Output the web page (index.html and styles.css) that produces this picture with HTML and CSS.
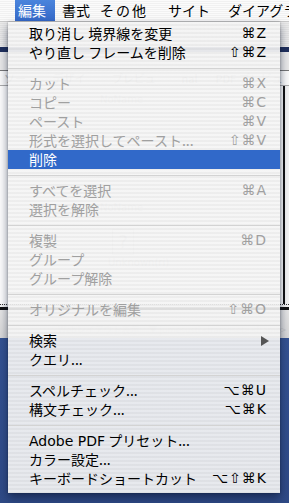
FILE: index.html
```html
<html>
  <head>
    <link rel="stylesheet" href="styles.css">
  </head>
  <body>
    <div class="screen">
      <div class="menubar">
        <span class="title on">編集</span>
        <span class="title t-fmt">書式</span>
        <span class="title t-etc">その他</span>
        <span class="title t-site">サイト</span>
        <span class="title t-diag">ダイアグラム</span>
      </div>

      <div class="window">
        <div class="win-top"><span class="file">Sample.shtml</span></div>
        <div class="win-band"></div>
        <div class="win-bar"></div>
        <div class="win-tools">
          <span>ソース</span><span>デザイン</span><span>プレビュー</span><span>nal</span><span>PDF プレビュー</span>
        </div>
        <div class="win-doc">
          <div class="frame">NoName</div>
          <div class="frame low">
            NoName
            <div class="unknown">?</div>
            <div class="cap">Unknown(ri)</div>
          </div>
        </div>
        <div class="win-dots"></div>
        <div class="win-line"></div>
        <div class="win-status">Webレイアウト表示　▼ jumesusti &lt;frameset&gt; &lt;frame&gt;</div>
      </div>

      <div class="menu">
        <div class="item"><span>取り消し 境界線を変更</span><span class="key">⌘Z</span></div>
        <div class="item"><span>やり直し フレームを削除</span><span class="key">⇧⌘Z</span></div>
        <div class="sep"></div>
        <div class="item off"><span>カット</span><span class="key">⌘X</span></div>
        <div class="item off"><span>コピー</span><span class="key">⌘C</span></div>
        <div class="item off"><span>ペースト</span><span class="key">⌘V</span></div>
        <div class="item off"><span>形式を選択してペースト...</span><span class="key">⇧⌘V</span></div>
        <div class="item sel"><span>削除</span></div>
        <div class="sep"></div>
        <div class="item off"><span>すべてを選択</span><span class="key">⌘A</span></div>
        <div class="item off"><span>選択を解除</span></div>
        <div class="sep"></div>
        <div class="item off"><span>複製</span><span class="key">⌘D</span></div>
        <div class="item off"><span>グループ</span></div>
        <div class="item off"><span>グループ解除</span></div>
        <div class="sep"></div>
        <div class="item off"><span>オリジナルを編集</span><span class="key">⇧⌘O</span></div>
        <div class="sep"></div>
        <div class="item"><span>検索</span>
          <svg class="arrow" width="8" height="10" viewBox="0 0 8 10"><polygon points="0,0 8,5 0,10" /></svg>
        </div>
        <div class="item"><span>クエリ...</span></div>
        <div class="sep"></div>
        <div class="item"><span>スペルチェック...</span><span class="key">⌥⌘U</span></div>
        <div class="item"><span>構文チェック...</span><span class="key">⌥⌘K</span></div>
        <div class="sep"></div>
        <div class="item"><span><span class="lat">Adobe PDF</span> プリセット...</span></div>
        <div class="item"><span>カラー設定...</span></div>
        <div class="item"><span>キーボードショートカット</span><span class="key">⌥⇧⌘K</span></div>
      </div>
    </div>
  </body>
</html>
```

FILE: styles.css
```css
body {
  margin: 0;
  font-family: "Noto Sans CJK JP", "DejaVu Sans", sans-serif;
  font-size: 14px;
}
.screen {
  position: relative;
  width: 289px;
  height: 503px;
  overflow: hidden;
  background: linear-gradient(180deg, #3f62a6 0%, #365595 60%, #2f4a86 100%);
}
.menubar {
  display: flex;
  height: 21px;
  line-height: 20px;
  padding-left: 15px;
  background: repeating-linear-gradient(180deg, #fbfbfb 0 1px, #f1f1f1 1px 2px);
  border-bottom: 1px solid #c9c9c9;
  white-space: nowrap;
}
.title {
  color: #000;
}
.title.on {
  padding: 0 9px 0 3px;
  color: #fff;
  background: linear-gradient(180deg, #4a84dc, #3569c8);
}
.t-fmt {
  padding-left: 7px;
}
.t-etc {
  padding-left: 10px;
  letter-spacing: 2px;
}
.t-site {
  padding-left: 20px;
}
.t-diag {
  padding-left: 18px;
}
.window {
  height: 316px;
  background: #f4f4f4;
  display: flex;
  flex-direction: column;
}
.win-top {
  height: 25px;
  background: repeating-linear-gradient(180deg, #ebebeb 0 1px, #e2e2e2 1px 2px);
}
.file {
  display: block;
  padding: 28px 0 0 60px;
  font-family: "DejaVu Sans", sans-serif;
  font-size: 11px;
  color: #bbb;
}
.win-band {
  height: 5px;
  background: #1f2f5c;
}
.win-bar {
  height: 18px;
  background: #e9e9e9;
}
.win-tools {
  height: 14px;
  display: flex;
  gap: 18px;
  padding: 0 0 0 4px;
  font-size: 11px;
  line-height: 14px;
  color: #bdbdbd;
  background: #fafafa;
  border-top: 1px solid #777;
  border-bottom: 1px solid #aaa;
}
.win-doc {
  flex: 1;
  background: #fdfdfd;
  border-right: 2px solid #111;
  margin-right: 4px;
  padding: 8px 0 0 100px;
  font-family: "DejaVu Sans", sans-serif;
  font-size: 10px;
  color: #cfcfcf;
}
.frame {
  height: 108px;
}
.frame.low {
  height: auto;
}
.unknown {
  width: 20px;
  height: 24px;
  margin: 16px 0 0 12px;
  border: 1px solid #ddd;
  text-align: center;
  font-size: 18px;
  line-height: 24px;
}
.cap {
  margin: 2px 0 0 8px;
}
.win-dots {
  height: 2px;
  border-top: 1px dotted #333;
}
.win-line {
  height: 3px;
  background: #111;
}
.win-status {
  height: 28px;
  padding-left: 58px;
  font-size: 9px;
  line-height: 40px;
  color: #c8c8c8;
  background: linear-gradient(180deg, #e6e6e6, #d8d8d8);
  white-space: nowrap;
  overflow: hidden;
}
.menu {
  position: absolute;
  left: 8px;
  top: 22px;
  width: 272px;
  padding: 2px 0 5px;
  background: repeating-linear-gradient(180deg, rgba(245, 245, 245, 0.93) 0 2px, rgba(236, 236, 236, 0.93) 2px 4px);
  box-shadow: 0 5px 9px rgba(10, 20, 50, 0.55), 0 0 2px rgba(0, 0, 0, 0.3);
}
.item {
  display: flex;
  justify-content: space-between;
  align-items: center;
  height: 19px;
  line-height: 19px;
  padding: 0 13px 0 21px;
  color: #000;
  white-space: nowrap;
}
.item.off {
  color: #a0a0a0;
}
.item.sel {
  color: #fff;
  background: #3169c9;
}
.key {
  font-family: "DejaVu Sans", sans-serif;
  font-size: 14px;
  letter-spacing: 1px;
}
.lat {
  font-family: "DejaVu Sans", sans-serif;
}
.arrow {
  fill: #555;
  margin-right: -2px;
}
.sep {
  height: 6px;
  border-bottom: 1px solid #d3d3d3;
  margin-bottom: 5px;
}
```
